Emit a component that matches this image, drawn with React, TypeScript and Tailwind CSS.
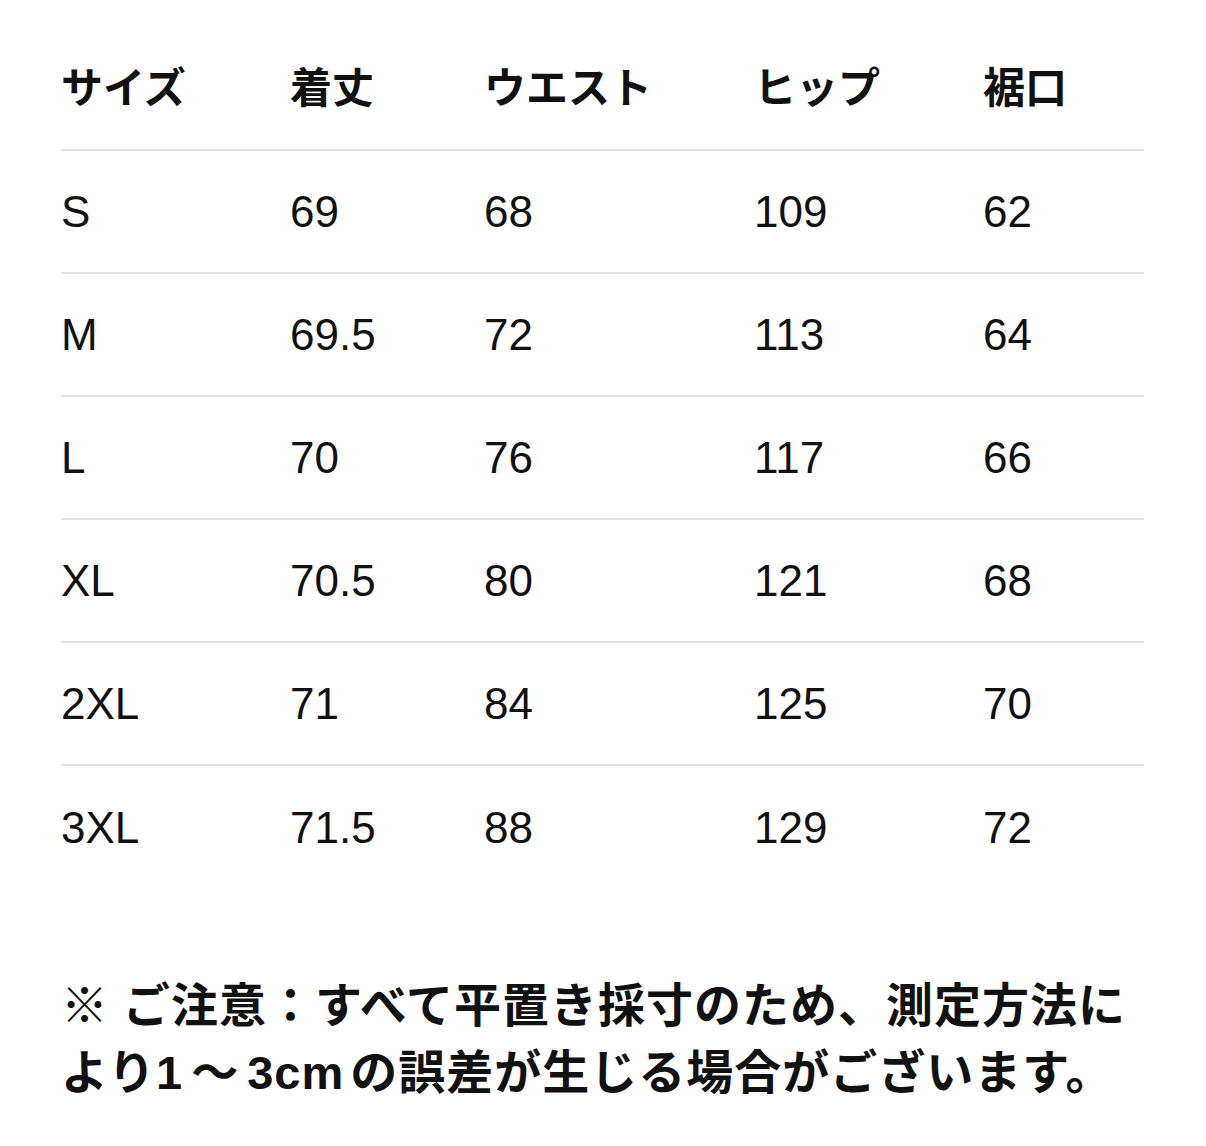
const headers = ['サイズ', '着丈', 'ウエスト', 'ヒップ', '裾口'];

const rows = [
  ['S', '69', '68', '109', '62'],
  ['M', '69.5', '72', '113', '64'],
  ['L', '70', '76', '117', '66'],
  ['XL', '70.5', '80', '121', '68'],
  ['2XL', '71', '84', '125', '70'],
  ['3XL', '71.5', '88', '129', '72'],
];

const cols = 'grid grid-cols-[229px_194px_270px_229px_1fr] items-center';

export default function App() {
  return (
    <div
      className="w-[1206px] min-h-[1146px] bg-white pl-[61px] pr-[62px] pt-[28px] text-[#111]"
      style={{ fontFamily: '"Liberation Sans", "Noto Sans CJK JP", sans-serif' }}
    >
      {/* header */}
      <div className={`${cols} h-[123px] border-b-2 border-[#e2e2e2] text-[42px] font-bold`}>
        {headers.map((h) => (
          <div key={h}>{h}</div>
        ))}
      </div>

      {/* body rows */}
      {rows.map((r, i) => (
        <div
          key={r[0]}
          className={`${cols} h-[123px] text-[44px] ${i < rows.length - 1 ? 'border-b-2 border-[#e2e2e2]' : ''}`}
        >
          {r.map((c, j) => (
            <div key={j}>{c}</div>
          ))}
        </div>
      ))}

      {/* note */}
      <p className="mt-[83px] whitespace-nowrap text-[47px] font-bold leading-[67px] tracking-[1px]">
        ※ ご注意：すべて平置き採寸のため、測定方法に
        <br />
        より1<span className="mx-[8px]">〜</span>3cm<span className="ml-[6px]">の誤差が生じる場合がございます。</span>
      </p>
    </div>
  );
}
